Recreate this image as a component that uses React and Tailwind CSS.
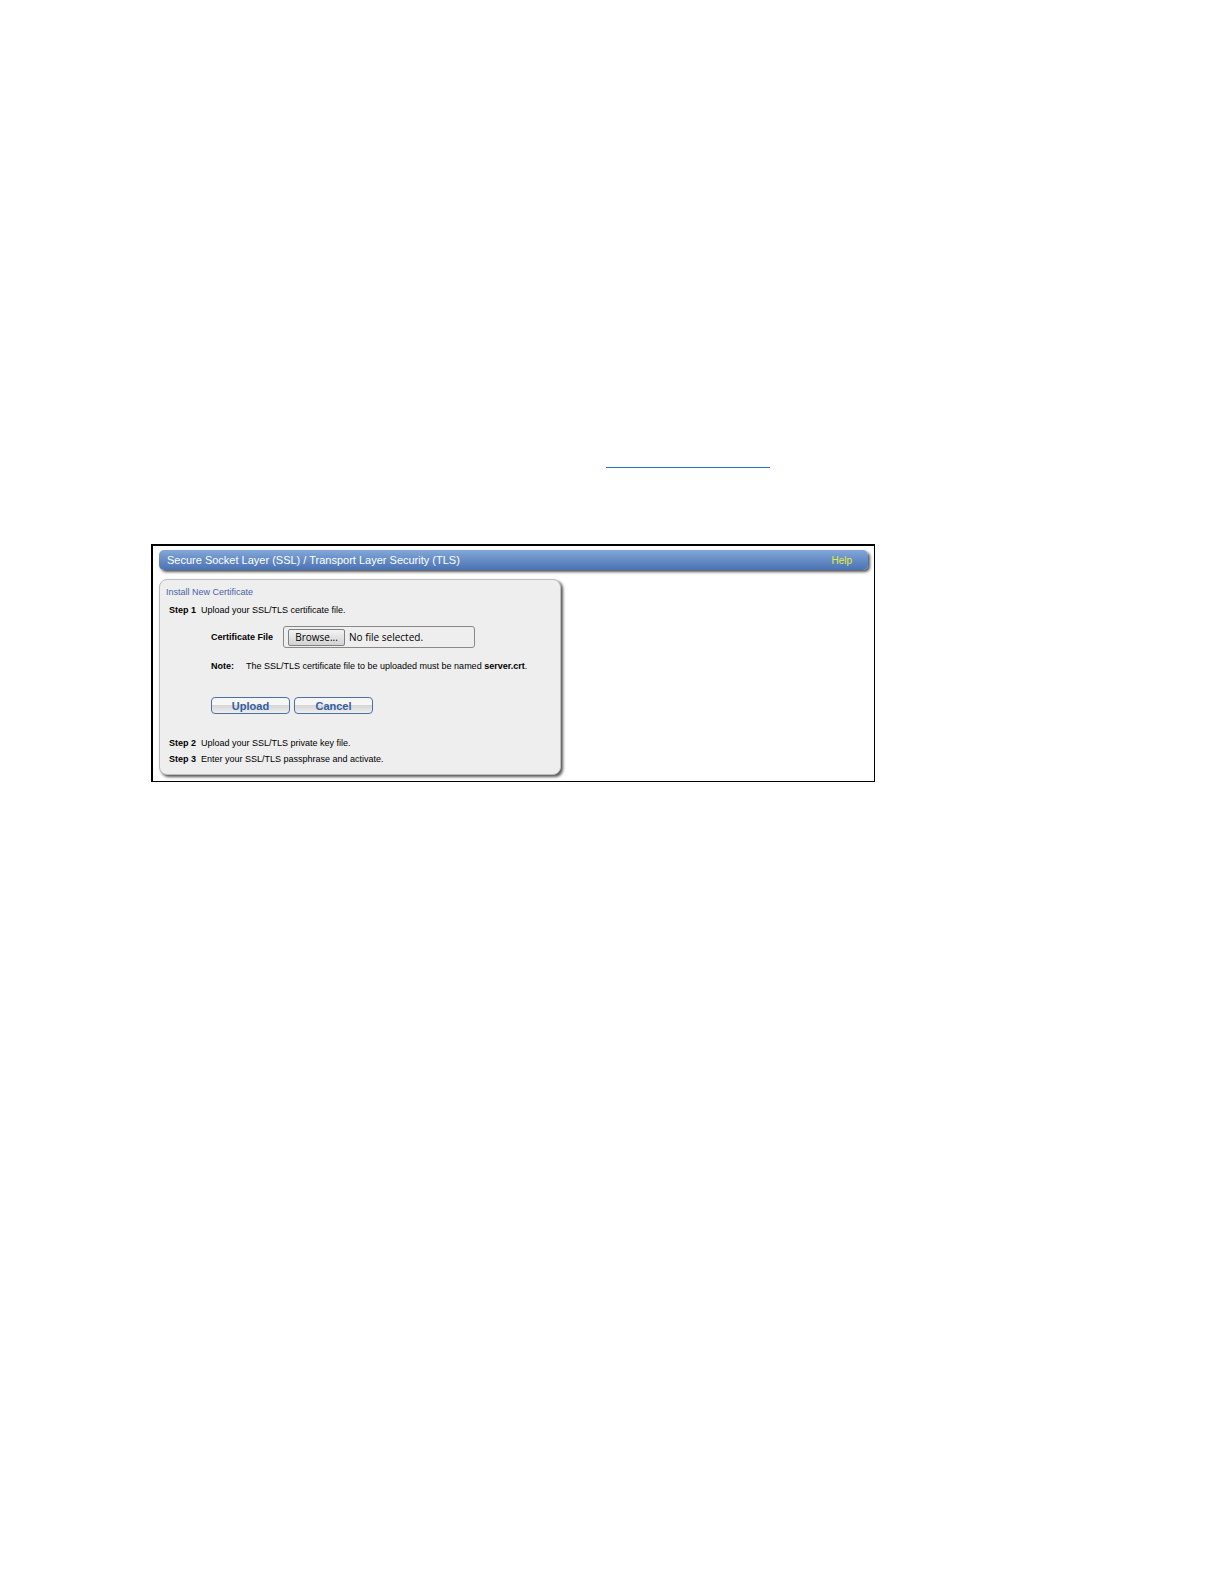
import { useRef, useState } from 'react';

const Step = ({ number, children }) => (
    <p className="pl-[9px] leading-4">
        <span className="inline-block w-8 font-bold">Step {number}</span>
        {children}
    </p>
);

const ActionButton = ({ type = 'button', onClick, children }) => (
    <button
        type={type}
        onClick={onClick}
        className="flex h-[17px] w-[79px] items-center justify-center rounded border border-[#4a70a8] bg-linear-to-b from-[#f6f6f6] from-50% via-[#d6d6d6] via-50% to-[#eeeeee] text-[11px] leading-4 font-bold text-[#35619f]"
    >
        {children}
    </button>
);

const App = () => {
    const fileInput = useRef(null);
    const [fileName, setFileName] = useState('');

    const handleCancel = () => {
        fileInput.current.value = '';
        setFileName('');
    };

    return (
        <main className="min-h-screen bg-white pt-[466px] pl-[151px] font-['Liberation_Sans',Arial,sans-serif] text-[9px] text-black">
            <a href="#certificate" aria-label="Certificate" className="ml-[455px] block h-[2px] w-[164px] border-b border-[#2e74b5]" />

            <section id="certificate" className="mt-[76px] max-w-[724px] border-t-2 border-r border-b border-l-2 border-black pt-1 pr-[6px] pb-[6px] pl-[6px]">
                {/* Title bar */}
                <header className="flex h-5 items-center justify-between rounded-[5px] bg-linear-to-b from-[#83a7d8] to-[#4a72b2] pr-4 pl-2 shadow-[2px_2px_3px_#555555]">
                    <h1 className="text-[11px] text-white">Secure Socket Layer (SSL) / Transport Layer Security (TLS)</h1>
                    <a href="#help" className="text-[10px] text-[#e4ee37]">Help</a>
                </header>

                {/* Certificate form */}
                <form
                    onSubmit={(e) => e.preventDefault()}
                    className="mt-[9px] max-w-[402px] rounded-lg border border-[#bbbbbb] bg-[#eeeeee] pt-1 pb-[7px] shadow-[2px_2px_3px_#555555]"
                >
                    <h2 className="mb-[2px] pl-[6px] leading-4 text-[#4864a8]">Install New Certificate</h2>
                    <Step number={1}>Upload your SSL/TLS certificate file.</Step>

                    <div className="pl-[51px]">
                        <div className="mt-2 flex items-center">
                            <label htmlFor="certificate-file" className="w-[72px] leading-4 font-bold">Certificate File</label>
                            <div className="relative flex h-[22px] w-[192px] items-center rounded-[3px] border border-[#888888] pl-1 font-['Open_Sans',sans-serif] text-[10px]">
                                <input
                                    id="certificate-file"
                                    ref={fileInput}
                                    type="file"
                                    accept=".crt"
                                    className="sr-only"
                                    onChange={(e) => setFileName(e.target.files[0]?.name || '')}
                                />
                                <button
                                    type="button"
                                    onClick={() => fileInput.current.click()}
                                    className="flex h-[17px] w-[57px] items-center justify-center rounded-[2px] border border-[#808080] bg-linear-to-b from-[#f3f3f3] to-[#d2d2d2]"
                                >
                                    Browse...
                                </button>
                                <span className="ml-1">{fileName || 'No file selected.'}</span>
                            </div>
                        </div>

                        <p className="mt-[10px] flex leading-4">
                            <b className="w-[35px]">Note:</b>
                            <span>The SSL/TLS certificate file to be uploaded must be named <b>server.crt</b>.</span>
                        </p>

                        <div className="mt-[23px] mb-[21px] flex gap-1">
                            <ActionButton type="submit">Upload</ActionButton>
                            <ActionButton onClick={handleCancel}>Cancel</ActionButton>
                        </div>
                    </div>

                    <Step number={2}>Upload your SSL/TLS private key file.</Step>
                    <Step number={3}>Enter your SSL/TLS passphrase and activate.</Step>
                </form>
            </section>
        </main>
    );
};

export default App;
